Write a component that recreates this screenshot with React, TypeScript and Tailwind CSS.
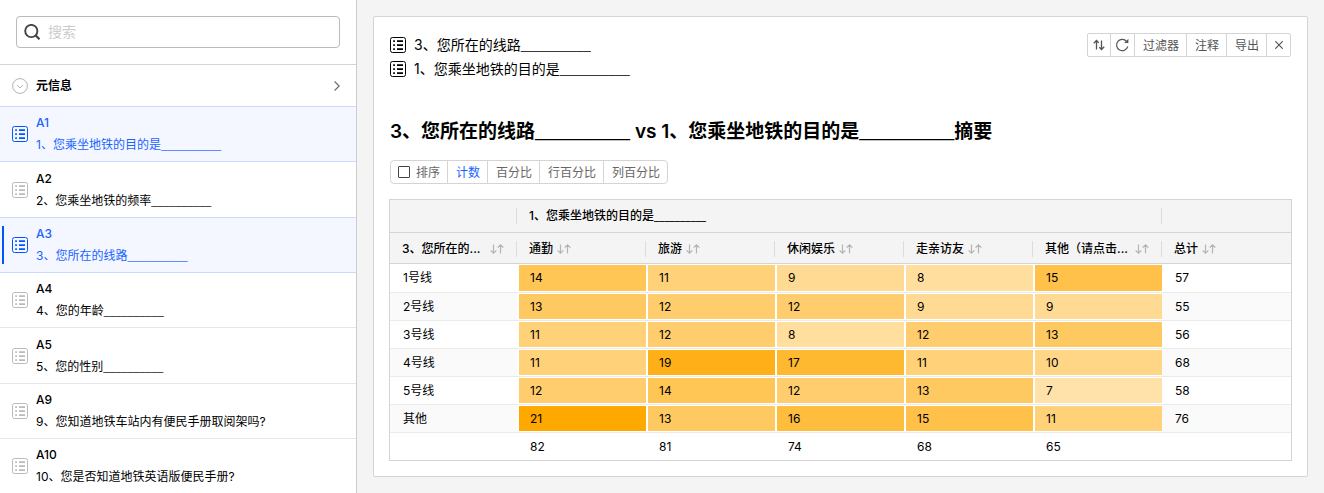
import React from "react";

type Question = { id: string; text: string; blank?: boolean; active?: boolean; current?: boolean };

const questions: Question[] = [
  { id: "A1", text: "1、您乘坐地铁的目的是", blank: true, active: true },
  { id: "A2", text: "2、您乘坐地铁的频率", blank: true },
  { id: "A3", text: "3、您所在的线路", blank: true, active: true, current: true },
  { id: "A4", text: "4、您的年龄", blank: true },
  { id: "A5", text: "5、您的性别", blank: true },
  { id: "A9", text: "9、您知道地铁车站内有便民手册取阅架吗?" },
  { id: "A10", text: "10、您是否知道地铁英语版便民手册?" },
];

const columns = [
  { label: "通勤" },
  { label: "旅游" },
  { label: "休闲娱乐" },
  { label: "走亲访友" },
  { label: "其他（请点击...", wide: true },
];

const rows = [
  { label: "1号线", values: [14, 11, 9, 8, 15], total: 57 },
  { label: "2号线", values: [13, 12, 12, 9, 9], total: 55 },
  { label: "3号线", values: [11, 12, 8, 12, 13], total: 56 },
  { label: "4号线", values: [11, 19, 17, 11, 10], total: 68 },
  { label: "5号线", values: [12, 14, 12, 13, 7], total: 58 },
  { label: "其他", values: [21, 13, 16, 15, 11], total: 76 },
];

const totals = [82, 81, 74, 68, 65];
const max = 21;

function Blank() {
  return <span className="font-['Liberation_Serif',serif] leading-none">__________</span>;
}

function ListIcon({ className }: { className?: string }) {
  return (
    <svg viewBox="0 0 16 16" className={`size-4 shrink-0 ${className ?? ""}`} aria-hidden="true">
      <rect x="0.5" y="0.5" width="15" height="15" rx="2" fill="none" stroke="currentColor" />
      <path
        fill="currentColor"
        d="M3.2 3.2h1.7v1.7H3.2zM7 3.2h6v1.7H7zM3.2 7.2h1.7v1.7H3.2zM7 7.2h6v1.7H7zM3.2 11.2h1.7v1.7H3.2zM7 11.2h6v1.7H7z"
      />
    </svg>
  );
}

function SortIcon() {
  return (
    <svg viewBox="0 0 14 12" className="h-3 w-3.5 shrink-0 text-[#b4b4b4]" fill="none" stroke="currentColor" strokeWidth="1.2" aria-hidden="true">
      <path d="M3.5 1.5v8.7M0.6 7.3l2.9 2.9 2.9-2.9M10.5 10.5V1.8M7.6 4.7l2.9-2.9 2.9 2.9" />
    </svg>
  );
}

function HeadCell({ children, wide, last }: { children: React.ReactNode; wide?: boolean; last?: boolean }) {
  return (
    <th scope="col" className="border-b border-[#d4d4d4] p-0 text-left font-medium">
      <div className="flex h-[30px] items-center pt-0.5">
        <div className="flex min-w-0 flex-1 items-center gap-1 px-3">
          <span className={`truncate ${wide ? "flex-1" : ""}`}>{children}</span>
          <button type="button" aria-label="排序列">
            <SortIcon />
          </button>
        </div>
        {!last && <span className="h-4 w-px bg-[#dcdcdc]" />}
      </div>
    </th>
  );
}

const toolButton = "flex h-full items-center justify-center border-r border-[#d4d4d4] last:border-r-0";
const textButton = `${toolButton} pt-0.5 pr-[7px] pl-2`;

export default function App() {
  return (
    <div className="flex h-screen overflow-hidden bg-[#f4f4f4] font-[Inter,'Noto_Sans_CJK_SC',sans-serif] text-xs text-black">
      <aside className="flex w-[357px] shrink-0 flex-col overflow-hidden border-r border-[#ccc] bg-white">
        <div className="border-b border-[#d4d4d4] p-4">
          <label className="flex h-8 items-center gap-2 rounded border border-[#bbb] px-[7px]">
            <svg viewBox="0 0 16 16" className="size-4 shrink-0 text-[#444]" fill="none" stroke="currentColor" strokeWidth="1.9" aria-hidden="true">
              <circle cx="7.3" cy="7" r="6.1" />
              <path d="M11.5 11.3l4 4" strokeWidth="2.2" />
            </svg>
            <input
              type="search"
              aria-label="搜索"
              placeholder="搜索"
              className="min-w-0 flex-1 bg-transparent text-sm outline-none placeholder:text-[#ccc]"
            />
          </label>
        </div>
        <button type="button" className="flex h-[42px] shrink-0 items-center gap-2 border-b border-[#c8dbff] pr-4 pl-3 text-left">
          <svg viewBox="0 0 16 16" className="size-4 shrink-0 text-[#b4b4b4]" fill="none" stroke="currentColor" aria-hidden="true">
            <circle cx="8" cy="8" r="7.4" />
            <path d="M5 7l3 3 3-3" />
          </svg>
          <span className="flex-1 font-semibold">元信息</span>
          <svg viewBox="0 0 6 10" className="h-2.5 w-1.5 text-[#666]" fill="none" stroke="currentColor" strokeWidth="1.1" aria-hidden="true">
            <path d="M0.6 0.5L5.2 5 0.6 9.5" />
          </svg>
        </button>
        <ul>
          {questions.map((q, i) => {
            const edged = q.active || questions[i + 1]?.active;
            return (
              <li
                key={q.id}
                className={`relative h-[55px] border-b nth-[3n+2]:h-14 ${edged ? "border-[#c8dbff]" : "border-[#e6e6e6]"} ${q.active ? "bg-[#f4f7ff] text-[#1a63ff]" : ""}`}
              >
                {q.current && <span className="absolute inset-y-2 left-0.5 w-0.5 bg-[#0055ff]" />}
                <button type="button" className="flex size-full items-center gap-2 pl-3 text-left">
                  <ListIcon className={q.active ? "text-[#0055ff]" : "text-[#bbb]"} />
                  <span className="min-w-0 flex-1 leading-[22px]">
                    <span className="block font-medium">{q.id}</span>
                    <span className="block truncate">
                      {q.text}
                      {q.blank && <Blank />}
                    </span>
                  </span>
                </button>
              </li>
            );
          })}
        </ul>
      </aside>

      <main className="min-w-0 flex-1 p-4">
        <section className="h-full rounded-xs border border-[#d4d4d4] bg-white p-4">
          <div className="flex items-start justify-between">
            <ul className="text-sm leading-6">
              <li className="flex items-center gap-2">
                <ListIcon />
                <span>3、您所在的线路<Blank /></span>
              </li>
              <li className="flex items-center gap-2">
                <ListIcon />
                <span>1、您乘坐地铁的目的是<Blank /></span>
              </li>
            </ul>
            <div className="flex h-6 rounded-xs border border-[#d4d4d4] text-[#555]">
              <button type="button" aria-label="转置" className={`${toolButton} w-[23px]`}>
                <svg viewBox="0 0 12 12" className="size-3" fill="none" stroke="currentColor" strokeWidth="1.3" aria-hidden="true">
                  <path d="M3.5 10.5V1.5M0.8 4.2l2.7-2.7 2.2 2.2M8.5 1.5v9M6.3 8.3l2.2 2.2 2.7-2.7" />
                </svg>
              </button>
              <button type="button" aria-label="刷新" className={`${toolButton} w-6`}>
                <svg viewBox="0 0 14 14" className="size-3.5" fill="none" stroke="currentColor" strokeWidth="1.2" aria-hidden="true">
                  <path d="M12.8 8.4A5.7 5.7 0 1 1 12 3.8" />
                  <path d="M13.4 0.8v4.2H9.2z" fill="currentColor" stroke="none" />
                </svg>
              </button>
              <button type="button" className={textButton}>过滤器</button>
              <button type="button" className={textButton}>注释</button>
              <button type="button" className={textButton}>导出</button>
              <button type="button" aria-label="关闭" className={`${toolButton} w-[23px]`}>
                <svg viewBox="0 0 8 8" className="size-2" fill="none" stroke="currentColor" strokeWidth="1.2" aria-hidden="true">
                  <path d="M0.3 0.3l7.4 7.4M7.7 0.3l-7.4 7.4" />
                </svg>
              </button>
            </div>
          </div>

          <h1 className="mt-9 pt-px text-[19px] leading-7 font-semibold">
            3、您所在的线路<Blank /> vs 1、您乘坐地铁的目的是<Blank />摘要
          </h1>

          <div className="mt-3.5 flex h-6 w-fit rounded border border-[#d4d4d4] text-[#666]">
            <label className={`${toolButton} gap-1.5 px-[7px]`}>
              <input type="checkbox" className="size-3 appearance-none rounded-[1px] border border-[#444] bg-white checked:bg-[#0055ff]" />
              <span className="pt-0.5">排序</span>
            </label>
            <button type="button" className={`${textButton} text-[#1a63ff]`}>计数</button>
            <button type="button" className={textButton}>百分比</button>
            <button type="button" className={textButton}>行百分比</button>
            <button type="button" className={textButton}>列百分比</button>
          </div>

          <div className="-mx-px mt-[15px] border border-[#d4d4d4]">
            <table className="w-full table-fixed border-separate border-spacing-0">
              <colgroup>
                <col className="w-[127px]" />
                <col span={6} />
              </colgroup>
              <thead className="bg-[#f4f4f4]">
                <tr>
                  <td className="border-b border-[#d4d4d4] p-0">
                    <div className="flex h-8 items-center justify-end">
                      <span className="h-4 w-px bg-[#dcdcdc]" />
                    </div>
                  </td>
                  <th scope="colgroup" colSpan={5} className="border-b border-[#d4d4d4] p-0 text-left font-medium">
                    <div className="flex h-8 items-center">
                      <span className="flex-1 truncate px-3">
                        1、您乘坐地铁的目的是
                        <span className="font-['Noto_Sans',sans-serif]">__________</span>
                      </span>
                      <span className="h-4 w-px bg-[#dcdcdc]" />
                    </div>
                  </th>
                  <td className="border-b border-[#d4d4d4] p-0" />
                </tr>
                <tr>
                  <HeadCell wide>3、您所在的...</HeadCell>
                  {columns.map((c) => (
                    <HeadCell key={c.label} wide={c.wide}>{c.label}</HeadCell>
                  ))}
                  <HeadCell last>总计</HeadCell>
                </tr>
              </thead>
              <tbody>
                {rows.map((r) => (
                  <tr key={r.label} className="group even:bg-[#fafafa]">
                    <th scope="row" className="border-b border-[#ebebeb] p-0 pl-[13px] text-left font-normal">{r.label}</th>
                    {r.values.map((v, i) => (
                      <td key={i} className="border-b border-[#ebebeb] bg-white p-0 py-px pl-0.5">
                        <div
                          className="flex h-[25px] items-center pl-[11px] group-first:h-[26px]"
                          style={{ backgroundColor: `rgba(255, 168, 0, ${v / max})` }}
                        >
                          {v}
                        </div>
                      </td>
                    ))}
                    <td className="border-b border-[#ebebeb] p-0 pl-[13px]">{r.total}</td>
                  </tr>
                ))}
              </tbody>
              <tfoot>
                <tr>
                  <td />
                  {totals.map((t, i) => (
                    <td key={i} className="h-[27px] p-0 pl-[13px]">{t}</td>
                  ))}
                  <td />
                </tr>
              </tfoot>
            </table>
          </div>
        </section>
      </main>
    </div>
  );
}
